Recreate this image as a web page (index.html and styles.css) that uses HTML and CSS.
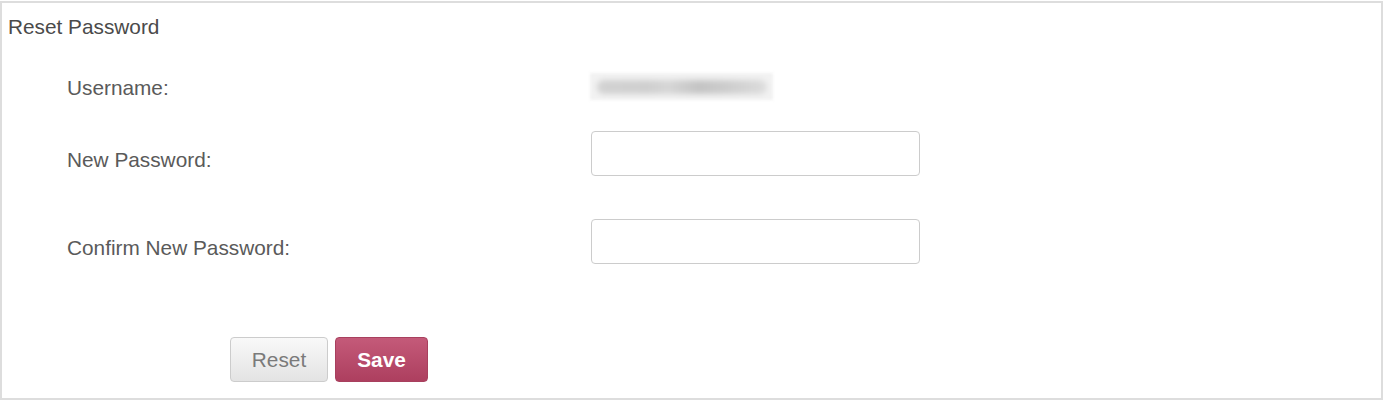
FILE: index.html
```html
<!DOCTYPE html>
<html lang="en">
<head>
<meta charset="utf-8">
<title>Reset Password</title>
<link rel="stylesheet" href="styles.css">
</head>
<body>
<div class="panel">
  <div class="title">Reset Password</div>
  <form class="form">
    <div class="row row-user">
      <div class="label">Username:</div>
      <div class="value"><div class="blurred"><span class="blur-ink"></span></div></div>
    </div>
    <div class="row row-new">
      <div class="label label-field">New Password:</div>
      <div class="value"><input class="field" type="password"></div>
    </div>
    <div class="row row-confirm">
      <div class="label label-field">Confirm New Password:</div>
      <div class="value"><input class="field" type="password"></div>
    </div>
    <div class="actions">
      <button type="button" class="btn btn-reset">Reset</button>
      <button type="button" class="btn btn-save">Save</button>
    </div>
  </form>
</div>
</body>
</html>
```

FILE: styles.css
```css
html, body {
  margin: 0;
  padding: 0;
  background: #ffffff;
}

body {
  font-family: "Liberation Sans", Arial, sans-serif;
  font-size: 20.8px;
  line-height: 24px;
  color: #5a5a5a;
}

.panel {
  box-sizing: border-box;
  margin-top: 1px;
  width: 1383px;
  height: 399px;
  border: 2px solid #dddddd;
  padding: 12px 0 0 0;
}

.title {
  padding-left: 6px;
  color: #4a4a4a;
}

.form {
  display: flex;
  flex-direction: column;
  padding-left: 65px;
}

.row {
  display: grid;
  grid-template-columns: 524px 329px;
  align-items: start;
}

.row-user {
  margin-top: 34px;
  height: 27px;
}

.row-user .label {
  margin-top: 3px;
}

.row-new {
  margin-top: 31px;
}

.row-confirm {
  margin-top: 43px;
}

.label-field {
  margin-top: 17px;
}

.value {
  display: flex;
}

.blurred {
  position: relative;
  margin-left: -1px;
  width: 183px;
  height: 27px;
  background: #f2f2f2;
  filter: blur(1.5px);
}

.blur-ink {
  position: absolute;
  left: 7px;
  top: 7px;
  width: 170px;
  height: 14px;
  border-radius: 7px;
  background: linear-gradient(90deg, #d2d2d2 0%, #cfcfcf 30%, #d6d6d6 42%, #c4c4c4 60%, #cccccc 75%, #d6d6d6 90%, #dddddd 100%);
  filter: blur(2.5px);
}

.field {
  box-sizing: border-box;
  width: 329px;
  height: 45px;
  margin: 0;
  border: 1px solid #cccccc;
  border-radius: 4px;
  background: #ffffff;
  font: inherit;
  padding: 0 8px;
}

.actions {
  display: flex;
  gap: 7px;
  margin-top: 73px;
  padding-left: 163px;
}

.btn {
  box-sizing: border-box;
  height: 45px;
  margin: 0;
  border-radius: 4px;
  font-family: "Liberation Sans", Arial, sans-serif;
  font-size: 20.8px;
  line-height: 24px;
  padding: 0;
  cursor: pointer;
}

.btn-reset {
  width: 98px;
  border: 1px solid #cccccc;
  background: linear-gradient(#f9f9f9, #e3e3e3);
  color: #7a7a7a;
}

.btn-save {
  width: 93px;
  border: 1px solid #a8405e;
  background: linear-gradient(#c45a79, #ad3f5f);
  color: #ffffff;
  font-weight: bold;
}
```
